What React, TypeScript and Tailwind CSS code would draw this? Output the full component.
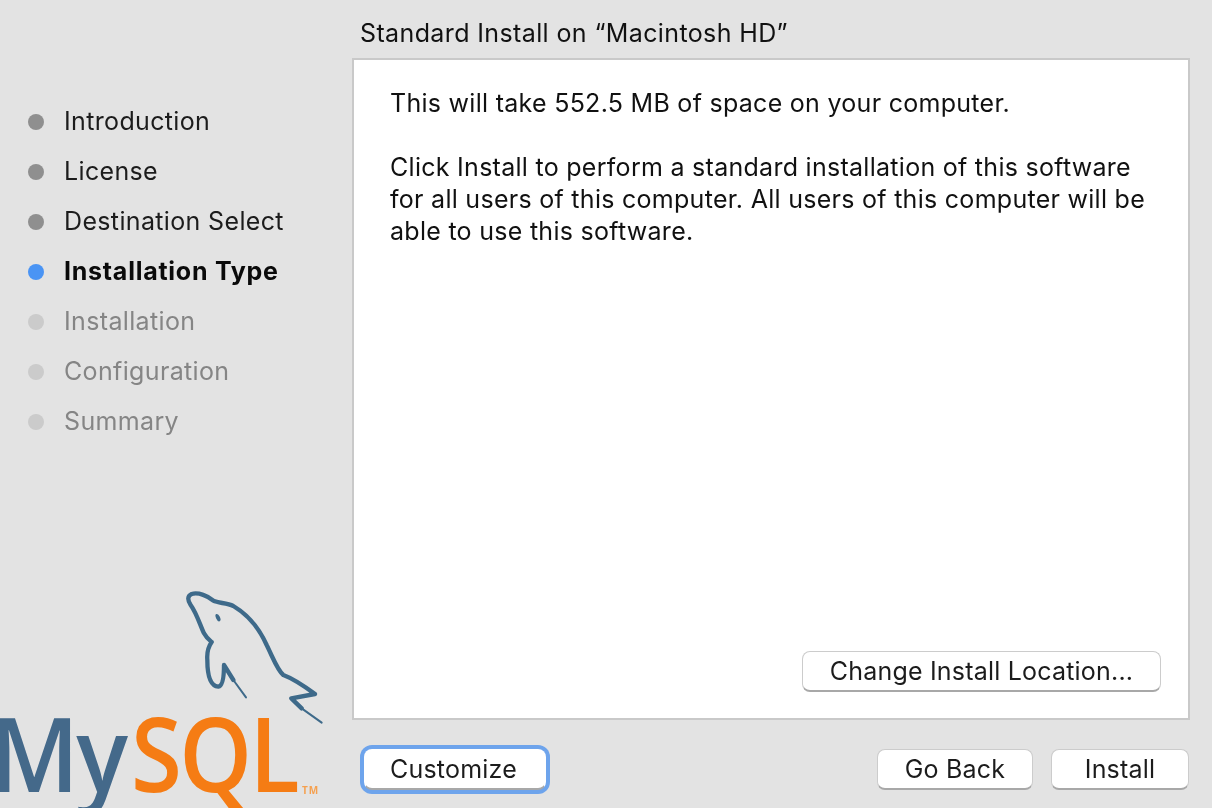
const steps = [
  { label: "Introduction", state: "done" },
  { label: "License", state: "done" },
  { label: "Destination Select", state: "done" },
  { label: "Installation Type", state: "current" },
  { label: "Installation", state: "todo" },
  { label: "Configuration", state: "todo" },
  { label: "Summary", state: "todo" },
];

const buttonClass =
  "flex items-center justify-center rounded-[8px] border border-[#cccccc] border-b-[#a8a8a8] border-b-2 bg-white text-[#1c1c1c] text-[25px] leading-none tracking-[0.2px]";

const Logo = () => (
  <div className="relative h-[228px] w-[340px] overflow-hidden">
    <svg viewBox="0 0 1020 684" className="absolute inset-0 h-full w-full" fill="none">
      <g stroke="#3e6a8a" strokeLinejoin="round" strokeLinecap="round">
        <path
          strokeWidth="13"
          d="M905 385 L874 355 L945 342 C915 320 885 298 850 285 C832 270 822 240 800 195 C780 150 745 105 700 78 C680 68 655 70 640 62 C625 48 595 36 575 42 C562 48 562 60 572 75 C590 100 600 135 612 160 C620 175 630 182 635 186 C625 200 620 215 622 240 C622 280 630 318 655 320 C668 318 672 290 672 255 L700 300"
        />
        <path strokeWidth="6" d="M905 385 L965 428" />
        <path strokeWidth="6" d="M700 300 L738 352" />
      </g>
      <ellipse cx="654" cy="113" rx="6" ry="12" fill="#3e6a8a" transform="rotate(-25 654 113)" />
    </svg>
    <span className="absolute left-[-10px] top-[112px] origin-left scale-x-[0.93] font-['Open_Sans',sans-serif] text-[104px] leading-[120px] font-semibold tracking-[-3px] text-[#44698a]">
      My
    </span>
    <span className="absolute left-[131px] top-[112px] origin-left scale-x-[0.89] font-['Open_Sans',sans-serif] text-[104px] leading-[120px] font-semibold tracking-[-3px] text-[#f57c14]">
      SQL
    </span>
    <span className="absolute left-[302px] top-[205px] font-['Open_Sans',sans-serif] text-[10px] leading-[10px] font-bold tracking-[1px] text-[#f5a04f]">
      TM
    </span>
  </div>
);

export default function App() {
  return (
    <div className="flex h-[808px] w-[1212px] overflow-hidden bg-[#e3e3e3] font-['Inter',sans-serif] text-[#111111] blur-[0.5px]">
      <aside className="flex w-[352px] shrink-0 flex-col justify-between">
        <ul className="flex flex-col pt-[97px] pl-[28px]">
          {steps.map((step) => (
            <li
              key={step.label}
              className={
                "flex h-[50px] items-center gap-[20px] text-[25px] " +
                (step.state === "current"
                  ? "font-bold tracking-[0.75px] text-[#0a0a0a]"
                  : step.state === "todo"
                    ? "tracking-[0.35px] text-[#858585]"
                    : "tracking-[0.35px] text-[#1c1c1c]")
              }
            >
              <span
                className={
                  "h-[16px] w-[16px] rounded-full " +
                  (step.state === "current"
                    ? "bg-[#4a94f4]"
                    : step.state === "todo"
                      ? "bg-[#cbcbcb]"
                      : "bg-[#8f8f8f]")
                }
              />
              {step.label}
            </li>
          ))}
        </ul>
        <Logo />
      </aside>

      <main className="flex w-[838px] flex-col">
        <h1 className="flex h-[58px] items-center pt-[10px] pl-[8px] text-[25px] font-normal tracking-[0.38px]">
          Standard Install on “Macintosh HD”
        </h1>
        <section className="flex h-[662px] flex-col justify-between border-2 border-[#c9c9c9] bg-white pt-[27px] pr-[27px] pb-[26px] pl-[36px]">
          <div className="text-[25px] leading-[32px] tracking-[0.28px]">
            <p className="mb-[32px]">This will take 552.5 MB of space on your computer.</p>
            <p>
              Click Install to perform a standard installation of this software
              <br />
              for all users of this computer. All users of this computer will be
              <br />
              able to use this software.
            </p>
          </div>
          <div className="flex justify-end">
            <button className={buttonClass + " h-[41px] w-[359px]"}>Change Install Location...</button>
          </div>
        </section>
        <footer className="flex items-center justify-between pt-[29px] pr-[1px] pl-[12px]">
          <button className={buttonClass + " h-[41px] w-[182px] border-transparent pr-[3px] shadow-[0_0_0_4px_#6ea4ec]"}>
            Customize
          </button>
          <div className="flex gap-[18px]">
            <button className={buttonClass + " h-[41px] w-[156px]"}>Go Back</button>
            <button className={buttonClass + " h-[41px] w-[138px]"}>Install</button>
          </div>
        </footer>
      </main>
    </div>
  );
}
